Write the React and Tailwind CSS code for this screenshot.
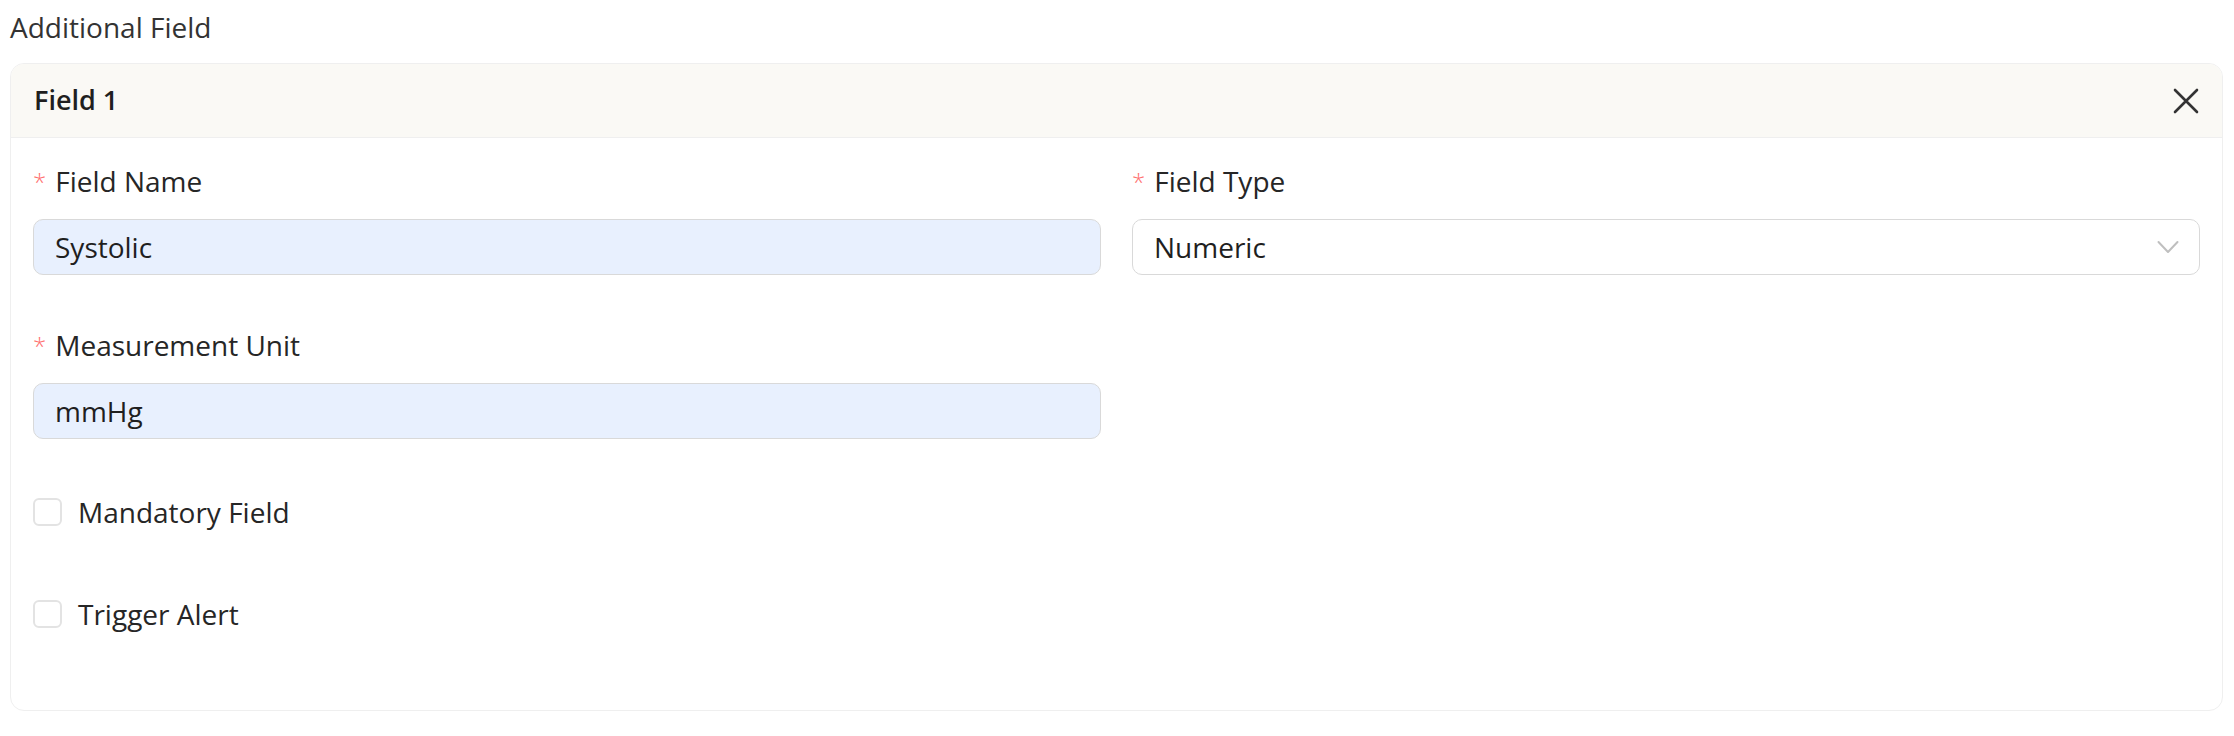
import React from 'react';

const font = { fontFamily: '"Open Sans", "Noto Sans", sans-serif' };

const Label = ({ children }) => (
  <div className="flex items-center h-[40px] text-[28px] leading-[40px] text-[#262626]">
    <span className="text-[#ff7070] text-[24px] font-light mr-[9px] mt-[2px]">*</span>
    {children}
  </div>
);

const TextInput = ({ value }) => (
  <div className="mt-[18px] h-[56px] rounded-[10px] border border-[#d9d9d9] bg-[#e8f0fe] px-[21px] flex items-center text-[28px] text-[#1f1f1f]">
    {value}
  </div>
);

const Check = ({ label }) => (
  <label className="flex items-center h-[40px] text-[28px] text-[#262626]">
    <span className="w-[29px] h-[28px] rounded-[6px] border-2 border-[#e3e3e3] bg-white mr-[16px]" />
    {label}
  </label>
);

export default function App() {
  return (
    <div className="bg-white min-h-screen px-[10px] pr-[11px] pt-[7px]" style={font}>
      <div className="text-[28px] leading-[40px] text-[#333]">Additional Field</div>

      <div className="mt-[16px] rounded-[14px] border border-[#efefef] overflow-hidden">
        {/* Header */}
        <div className="h-[74px] bg-[#faf9f5] border-b border-[#efefef] flex items-center justify-between px-[23px]">
          <span className="text-[27px] font-semibold text-[#1f1f1f]">Field 1</span>
          <svg width="26" height="26" viewBox="0 0 26 26">
            <path d="M2 2 L24 24 M24 2 L2 24" stroke="#333" strokeWidth="2.6" strokeLinecap="round" />
          </svg>
        </div>

        {/* Body */}
        <div className="px-[22px] pt-[23px] pb-[76px]">
          <div className="grid grid-cols-2 gap-x-[31px]">
            <div>
              <Label>Field Name</Label>
              <TextInput value="Systolic" />
            </div>
            <div>
              <Label>Field Type</Label>
              <div className="mt-[18px] h-[56px] rounded-[10px] border border-[#d9d9d9] bg-white pl-[21px] pr-[20px] flex items-center justify-between text-[28px] text-[#1f1f1f]">
                <span>Numeric</span>
                <svg width="22" height="14" viewBox="0 0 22 14">
                  <path d="M1.5 2 L11 12 L20.5 2" fill="none" stroke="#bfbfbf" strokeWidth="2" strokeLinecap="round" strokeLinejoin="round" />
                </svg>
              </div>
            </div>
          </div>

          <div className="grid grid-cols-2 gap-x-[31px] mt-[50px]">
            <div>
              <Label>Measurement Unit</Label>
              <TextInput value="mmHg" />
            </div>
          </div>

          <div className="mt-[53px] flex flex-col gap-[62px]">
            <Check label="Mandatory Field" />
            <Check label="Trigger Alert" />
          </div>
        </div>
      </div>
    </div>
  );
}
